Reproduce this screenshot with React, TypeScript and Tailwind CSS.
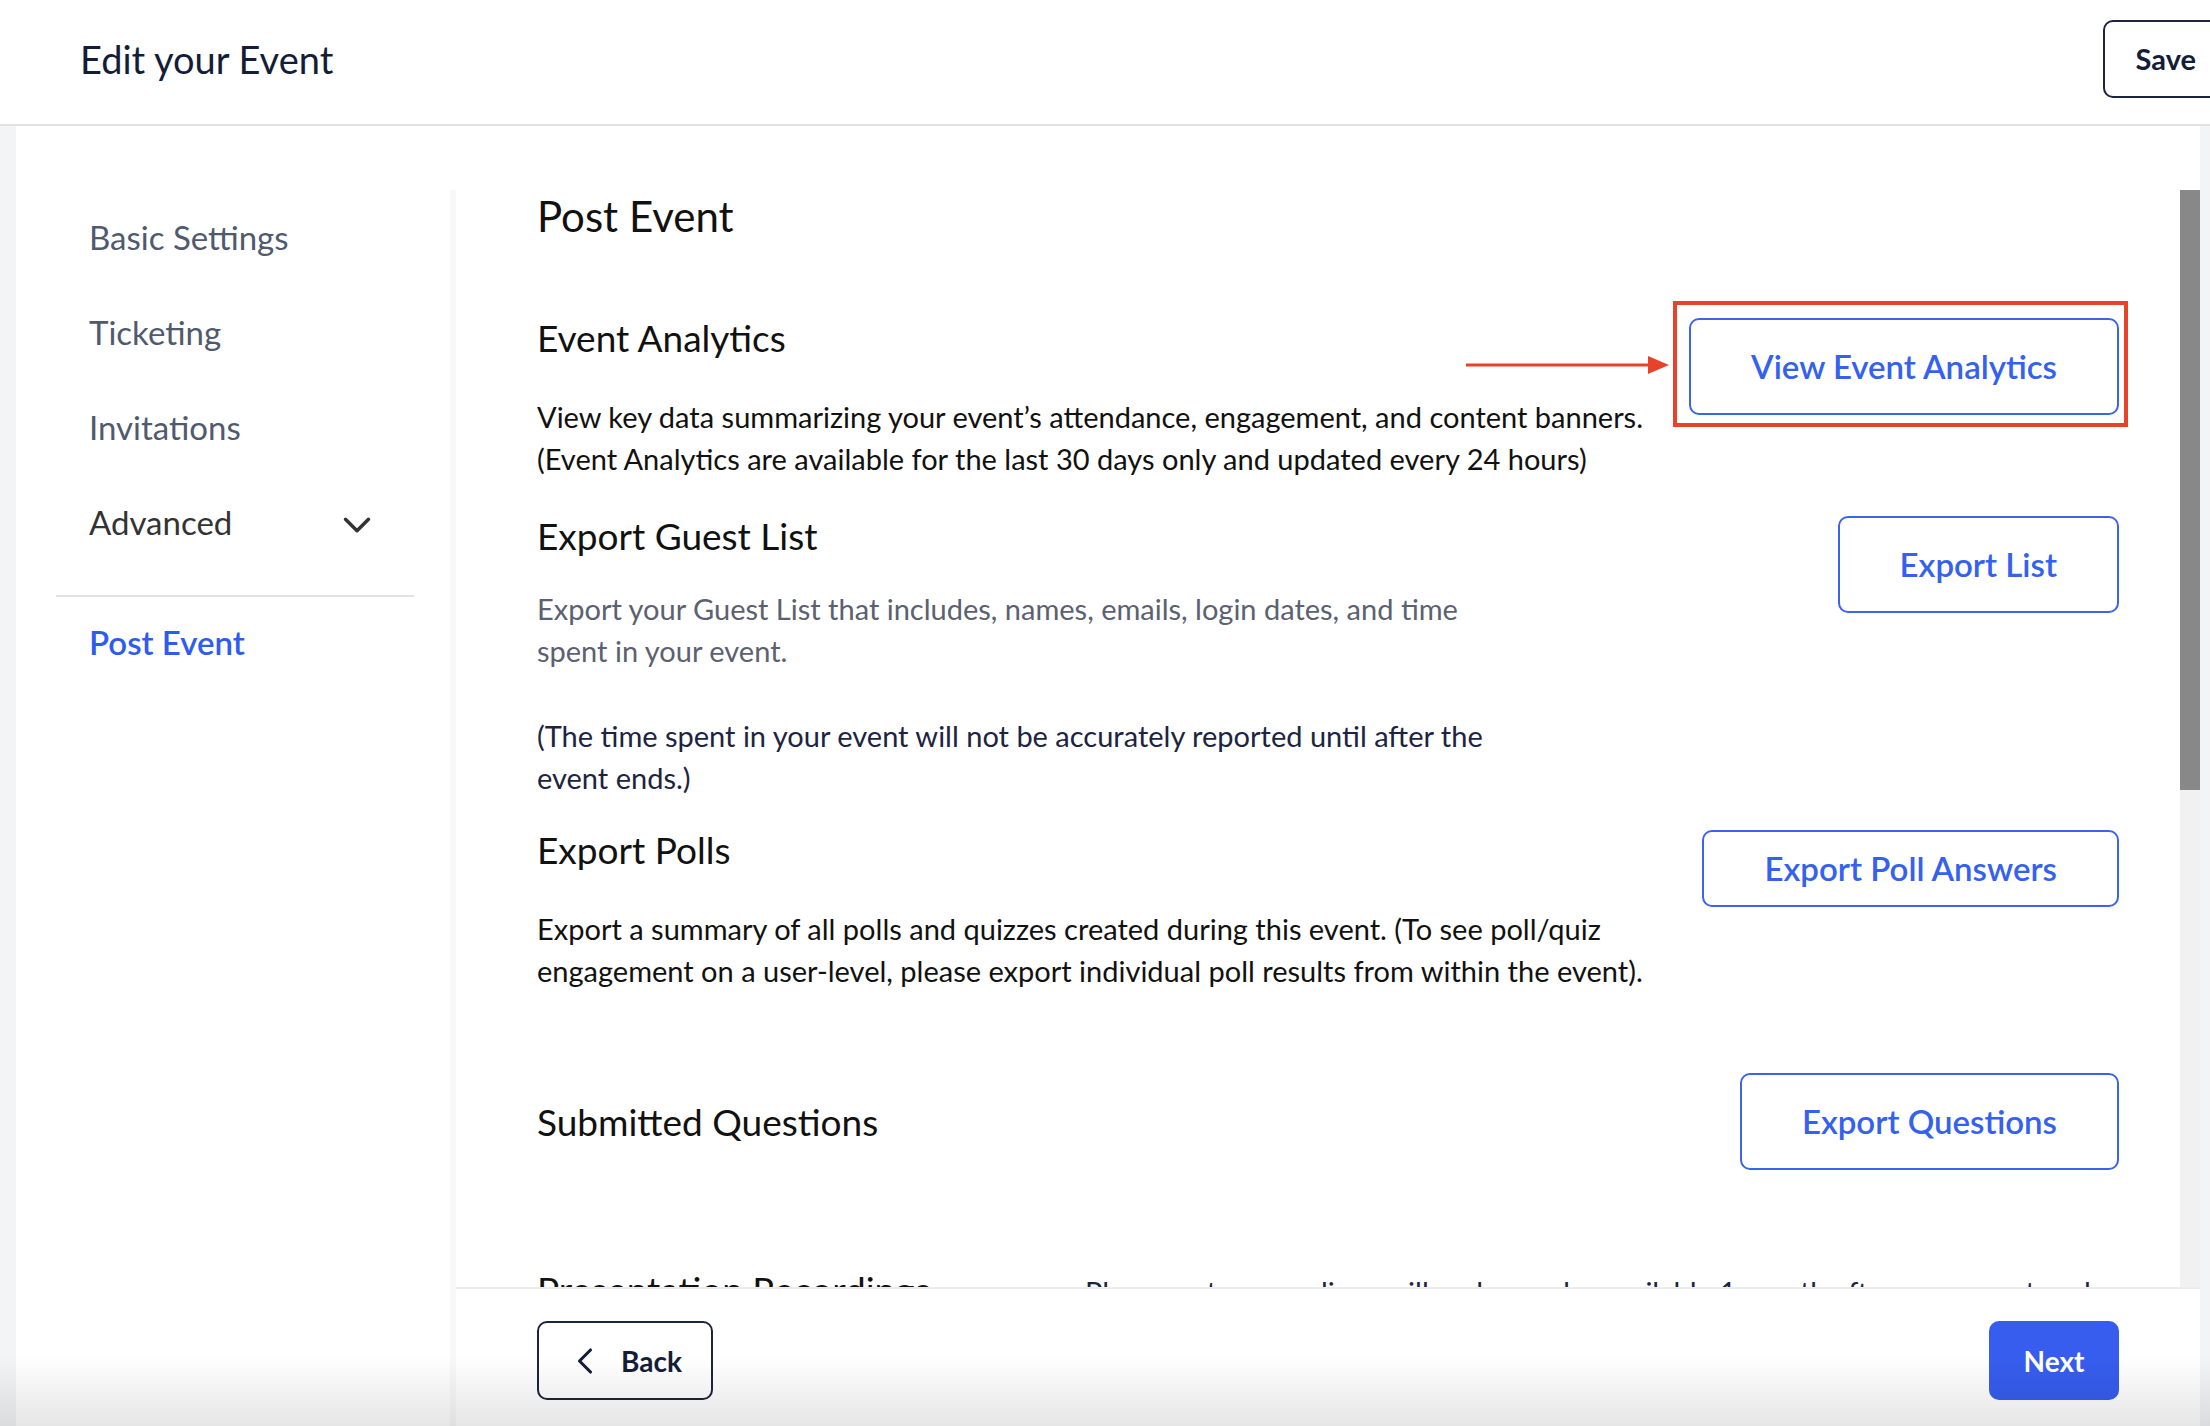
import { ChevronDown, ChevronLeft } from "lucide-react";

// edit-event wizard, "Post Event" step
const NAV = ["Basic Settings", "Ticketing", "Invitations"];

function OutlineButton({ label, tall = true }: { label: string; tall?: boolean }) {
  return (
    <button
      className={
        tall
          ? "h-[97px] shrink-0 rounded-[10px] border-2 border-[#3b63ef] bg-white px-[60px] text-[33px] font-semibold text-[#3461ee]"
          : "h-[77px] shrink-0 rounded-[10px] border-2 border-[#3b63ef] bg-white px-[60px] text-[33px] font-semibold text-[#3461ee]"
      }
    >
      {label}
    </button>
  );
}

export default function App() {
  return (
    <div className="relative h-[1426px] w-[2210px] overflow-hidden bg-white font-['Lato','Open_Sans',sans-serif]">
      {/* top bar */}
      <header className="flex h-[126px] items-center justify-between border-b-2 border-[#e2e2e2] pb-[6px] pl-[80px]">
        <h1 className="text-[38px] text-[#141d38]">Edit your Event</h1>
        <button className="mr-[-19px] h-[78px] rounded-[10px] border-2 border-[#1b2440] px-[31px] text-[29px] font-bold text-[#141d38]">
          Save
        </button>
      </header>

      <div className="flex h-[1300px] bg-[#f3f4f6] pl-[16px] pr-[10px]">
        <div className="flex flex-1 bg-white pt-[64px]">
          {/* sidebar */}
          <nav className="w-[434px] shrink-0">
            {NAV.map((item) => (
              <div key={item} className="flex h-[95px] items-center pl-[73px] text-[33px] text-[#4f5a6e]">
                {item}
              </div>
            ))}
            <div className="flex h-[95px] w-[364px] items-center justify-between pl-[73px] text-[33px] text-[#333]">
              Advanced
              <ChevronDown className="mt-[4px] h-[46px] w-[46px] text-[#333]" strokeWidth={1.8} />
            </div>
            <div className="ml-[40px] mt-[25px] h-[2px] w-[358px] bg-[#e2e2e2]" />
            <div className="flex h-[92px] items-center pl-[73px] text-[33px] font-semibold text-[#2f5cf0]">
              Post Event
            </div>
          </nav>

          <div className="w-[6px] shrink-0 bg-[#f8f8f8]" />

          {/* main column */}
          <main className="flex flex-1 flex-col">
            <div className="flex min-h-0 flex-1 overflow-hidden">
              <div className="flex-1 pl-[81px] pr-[61px] text-[#111]">
                <h2 className="text-[42px] leading-[52px]">Post Event</h2>

                <section className="mt-[76px] flex items-start justify-between">
                  <div>
                    <h3 className="text-[37px] leading-[40px]">Event Analytics</h3>
                    <p className="mt-[38px] whitespace-nowrap text-[29px] leading-[42px]">
                      View key data summarizing your event’s attendance, engagement, and content banners.
                      <br />
                      (Event Analytics are available for the last 30 days only and updated every 24 hours)
                    </p>
                  </div>
                  <div className="relative">
                    <OutlineButton label="View Event Analytics" />
                    <div className="pointer-events-none absolute -bottom-[12px] -left-[16px] -right-[9px] -top-[17px] border-[4px] border-[#e8432a]" />
                    <svg
                      className="pointer-events-none absolute right-full top-[37px] mr-[20px]"
                      width="203"
                      height="20"
                      viewBox="0 0 203 20"
                    >
                      <line x1="0" y1="10" x2="184" y2="10" stroke="#e8432a" strokeWidth="3" />
                      <polygon points="182,1 203,10 182,19" fill="#e8432a" />
                    </svg>
                  </div>
                </section>

                <section className="mt-[36px] flex items-start justify-between">
                  <div>
                    <h3 className="text-[37px] leading-[40px]">Export Guest List</h3>
                    <p className="mt-[32px] whitespace-nowrap text-[29px] leading-[42px] text-[#5b6170]">
                      Export your Guest List that includes, names, emails, login dates, and time
                      <br />
                      spent in your event.
                    </p>
                    <p className="mt-[43px] whitespace-nowrap text-[29px] leading-[42px] text-[#1c2442]">
                      (The time spent in your event will not be accurately reported until after the
                      <br />
                      event ends.)
                    </p>
                  </div>
                  <OutlineButton label="Export List" />
                </section>

                <section className="mt-[31px] flex items-start justify-between">
                  <div>
                    <h3 className="text-[37px] leading-[40px]">Export Polls</h3>
                    <p className="mt-[38px] whitespace-nowrap text-[29px] leading-[42px]">
                      Export a summary of all polls and quizzes created during this event. (To see poll/quiz
                      <br />
                      engagement on a user-level, please export individual poll results from within the event).
                    </p>
                  </div>
                  <OutlineButton label="Export Poll Answers" tall={false} />
                </section>

                <section className="mt-[81px] flex items-center justify-between">
                  <h3 className="text-[37px] leading-[40px]">Submitted Questions</h3>
                  <OutlineButton label="Export Questions" />
                </section>

                <section className="mt-[100px] flex items-start">
                  <h3 className="w-[548px] shrink-0 text-[37px] leading-[40px]">Presentation Recordings</h3>
                  <p className="whitespace-nowrap pt-[4px] text-[29px] leading-[36px] text-[#1c2442]">
                    Please note, recordings will no longer be available 1 month after your event ends.
                  </p>
                </section>
              </div>

              {/* scrollbar */}
              <div className="flex w-[20px] shrink-0 flex-col bg-[#f1f1f1]">
                <div className="h-[600px] bg-[#888]" />
              </div>
            </div>

            <footer className="flex h-[139px] shrink-0 items-start justify-between border-t-2 border-[#ececec] bg-white pl-[81px] pr-[81px] pt-[32px]">
              <button className="flex h-[79px] w-[176px] items-center gap-[14px] rounded-[10px] border-2 border-[#1b2440] pl-[24px] text-[28px] font-bold text-[#141d38]">
                <ChevronLeft className="h-[44px] w-[44px]" strokeWidth={1.7} />
                Back
              </button>
              <button className="h-[79px] w-[130px] rounded-[10px] bg-[#365ded] text-[28px] font-bold text-white">
                Next
              </button>
            </footer>
          </main>
        </div>
      </div>

      {/* soft shade along the bottom edge of the window */}
      <div className="pointer-events-none absolute inset-x-0 bottom-0 h-[70px] bg-linear-to-b from-black/0 to-black/10" />
    </div>
  );
}
